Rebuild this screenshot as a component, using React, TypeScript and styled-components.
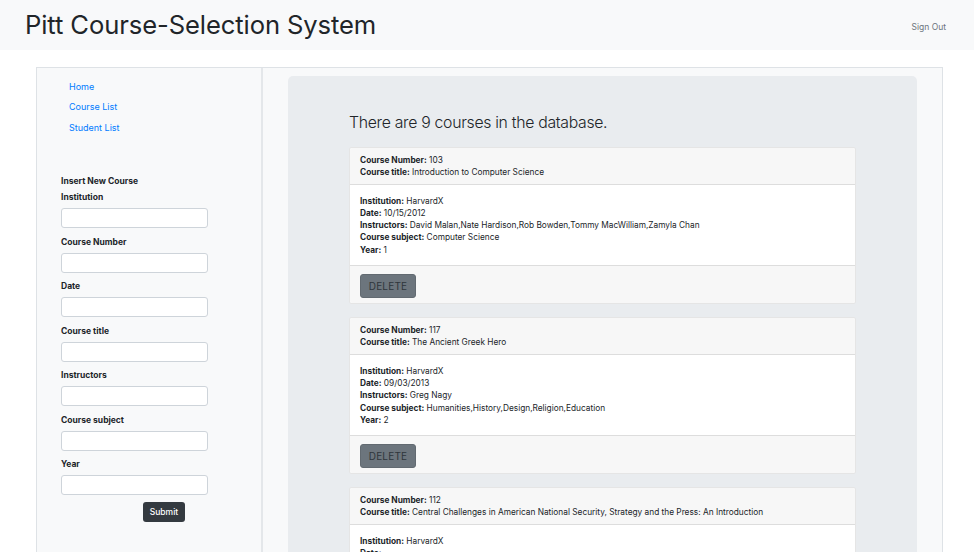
import React from "react";
import styled, { createGlobalStyle } from "styled-components";

const GlobalStyle = createGlobalStyle`
  html, body { margin: 0; padding: 0; background: #ffffff; }
  body {
    font-family: Inter, "Noto Sans", "Liberation Sans", sans-serif;
    color: #212529;
    -webkit-font-smoothing: antialiased;
  }
  * { box-sizing: border-box; }
`;

const Header = styled.header`
  height: 50px;
  background: #f8f9fa;
  display: flex;
  align-items: center;
  justify-content: space-between;
  padding: 0 28px 0 25px;
`;

const Title = styled.h1`
  margin: 0 0 1px 0;
  font-size: 25.6px;
  font-weight: 400;
  letter-spacing: -0.1px;
  color: #212529;
`;

const SignOut = styled.a`
  font-size: 8.5px;
  color: #6c757d;
  text-decoration: none;
  padding-top: 4px;
`;

const Shell = styled.div`
  margin: 17px 31px 0 36px;
  border: 1px solid #dee2e6;
  border-bottom: none;
  background: #f8f9fa;
  display: grid;
  grid-template-columns: 226px 1fr;
  min-height: 500px;
`;

const Sidebar = styled.aside`
  border-right: 2px solid #e4e7ea;
  padding: 9px 0 0 24px;
`;

const Nav = styled.nav`
  display: flex;
  flex-direction: column;
  padding-left: 8px;
`;

const NavLink = styled.a`
  font-size: 9px;
  line-height: 20.4px;
  color: #007bff;
  text-decoration: none;
`;

const Form = styled.form`
  margin-top: 37px;
  width: 147px;
  display: flex;
  flex-direction: column;
`;

const FormTitle = styled.div`
  font-size: 8.5px;
  font-weight: 700;
  line-height: 12px;
  margin-bottom: 4px;
`;

const Label = styled.label`
  font-size: 8.5px;
  font-weight: 700;
  line-height: 12px;
  margin-bottom: 5px;
`;

const Input = styled.input`
  height: 20px;
  width: 147px;
  border: 1px solid #ced4da;
  border-radius: 3px;
  background: #fff;
  margin: 0 0 7.5px 0;
  padding: 0 6px;
`;

const Submit = styled.button`
  align-self: flex-start;
  margin: -0.5px 0 0 82px;
  height: 20px;
  width: 42px;
  padding: 0;
  border: none;
  border-radius: 3px;
  background: #343a40;
  color: #fff;
  font-family: inherit;
  font-size: 8.5px;
  font-weight: 500;
`;

const Main = styled.main`
  padding: 8px 25px 0 25px;
`;

const Jumbo = styled.section`
  background: #e9ecef;
  border-radius: 5px;
  padding: 34px 61px 20px 61px;
`;

const Heading = styled.h2`
  margin: 0 0 12px 0;
  font-size: 15.8px;
  font-weight: 300;
  letter-spacing: -0.3px;
  line-height: 25px;
  color: #212529;
`;

const CardList = styled.div`
  display: flex;
  flex-direction: column;
  gap: 13px;
`;

const Card = styled.article`
  background: #fff;
  border: 1px solid rgba(0, 0, 0, 0.1);
  border-radius: 3px;
  overflow: hidden;
`;

const CardHeader = styled.div`
  background: #f7f7f7;
  border-bottom: 1px solid rgba(0, 0, 0, 0.1);
  padding: 6px 10px 5px 10px;
`;

const CardBody = styled.div`
  padding: 10px 10px 9px 10px;
`;

const CardFooter = styled.div`
  background: #f7f7f7;
  border-top: 1px solid rgba(0, 0, 0, 0.1);
  padding: 8px 10px 5px 10px;
`;

const Line = styled.div`
  font-size: 8.3px;
  line-height: 12.3px;
  color: #212529;
  white-space: nowrap;
`;

const Key = styled.b`
  font-weight: 700;
`;

const DeleteButton = styled.button`
  height: 24px;
  width: 56px;
  padding: 0;
  border: 1px solid #626a71;
  border-radius: 3px;
  background: #6c757d;
  color: #2f353b;
  font-family: inherit;
  font-size: 10px;
  letter-spacing: 0.2px;
`;

type Course = {
  number: string;
  title: string;
  institution: string;
  date: string;
  instructors: string;
  subject: string;
  year: string;
};

const courses: Course[] = [
  {
    number: "103",
    title: "Introduction to Computer Science",
    institution: "HarvardX",
    date: "10/15/2012",
    instructors: "David Malan,Nate Hardison,Rob Bowden,Tommy MacWilliam,Zamyla Chan",
    subject: "Computer Science",
    year: "1",
  },
  {
    number: "117",
    title: "The Ancient Greek Hero",
    institution: "HarvardX",
    date: "09/03/2013",
    instructors: "Greg Nagy",
    subject: "Humanities,History,Design,Religion,Education",
    year: "2",
  },
  {
    number: "112",
    title: "Central Challenges in American National Security, Strategy and the Press: An Introduction",
    institution: "HarvardX",
    date: "",
    instructors: "",
    subject: "",
    year: "",
  },
];

const fields = ["Institution", "Course Number", "Date", "Course title", "Instructors", "Course subject", "Year"];

function Field({ k, v }: { k: string; v: string }) {
  return (
    <Line>
      <Key>{k}:</Key> {v}
    </Line>
  );
}

export default function App() {
  return (
    <>
      <GlobalStyle />
      <Header>
        <Title>Pitt Course-Selection System</Title>
        <SignOut href="#">Sign Out</SignOut>
      </Header>
      <Shell>
        <Sidebar>
          <Nav>
            <NavLink href="#">Home</NavLink>
            <NavLink href="#">Course List</NavLink>
            <NavLink href="#">Student List</NavLink>
          </Nav>
          <Form onSubmit={(e) => e.preventDefault()}>
            <FormTitle>Insert New Course</FormTitle>
            {fields.map((f) => (
              <React.Fragment key={f}>
                <Label>{f}</Label>
                <Input type="text" />
              </React.Fragment>
            ))}
            <Submit type="submit">Submit</Submit>
          </Form>
        </Sidebar>
        <Main>
          <Jumbo>
            <Heading>There are 9 courses in the database.</Heading>
            <CardList>
              {courses.map((c) => (
                <Card key={c.number}>
                  <CardHeader>
                    <Field k="Course Number" v={c.number} />
                    <Field k="Course title" v={c.title} />
                  </CardHeader>
                  <CardBody>
                    <Field k="Institution" v={c.institution} />
                    <Field k="Date" v={c.date} />
                    <Field k="Instructors" v={c.instructors} />
                    <Field k="Course subject" v={c.subject} />
                    <Field k="Year" v={c.year} />
                  </CardBody>
                  <CardFooter>
                    <DeleteButton>DELETE</DeleteButton>
                  </CardFooter>
                </Card>
              ))}
            </CardList>
          </Jumbo>
        </Main>
      </Shell>
    </>
  );
}
